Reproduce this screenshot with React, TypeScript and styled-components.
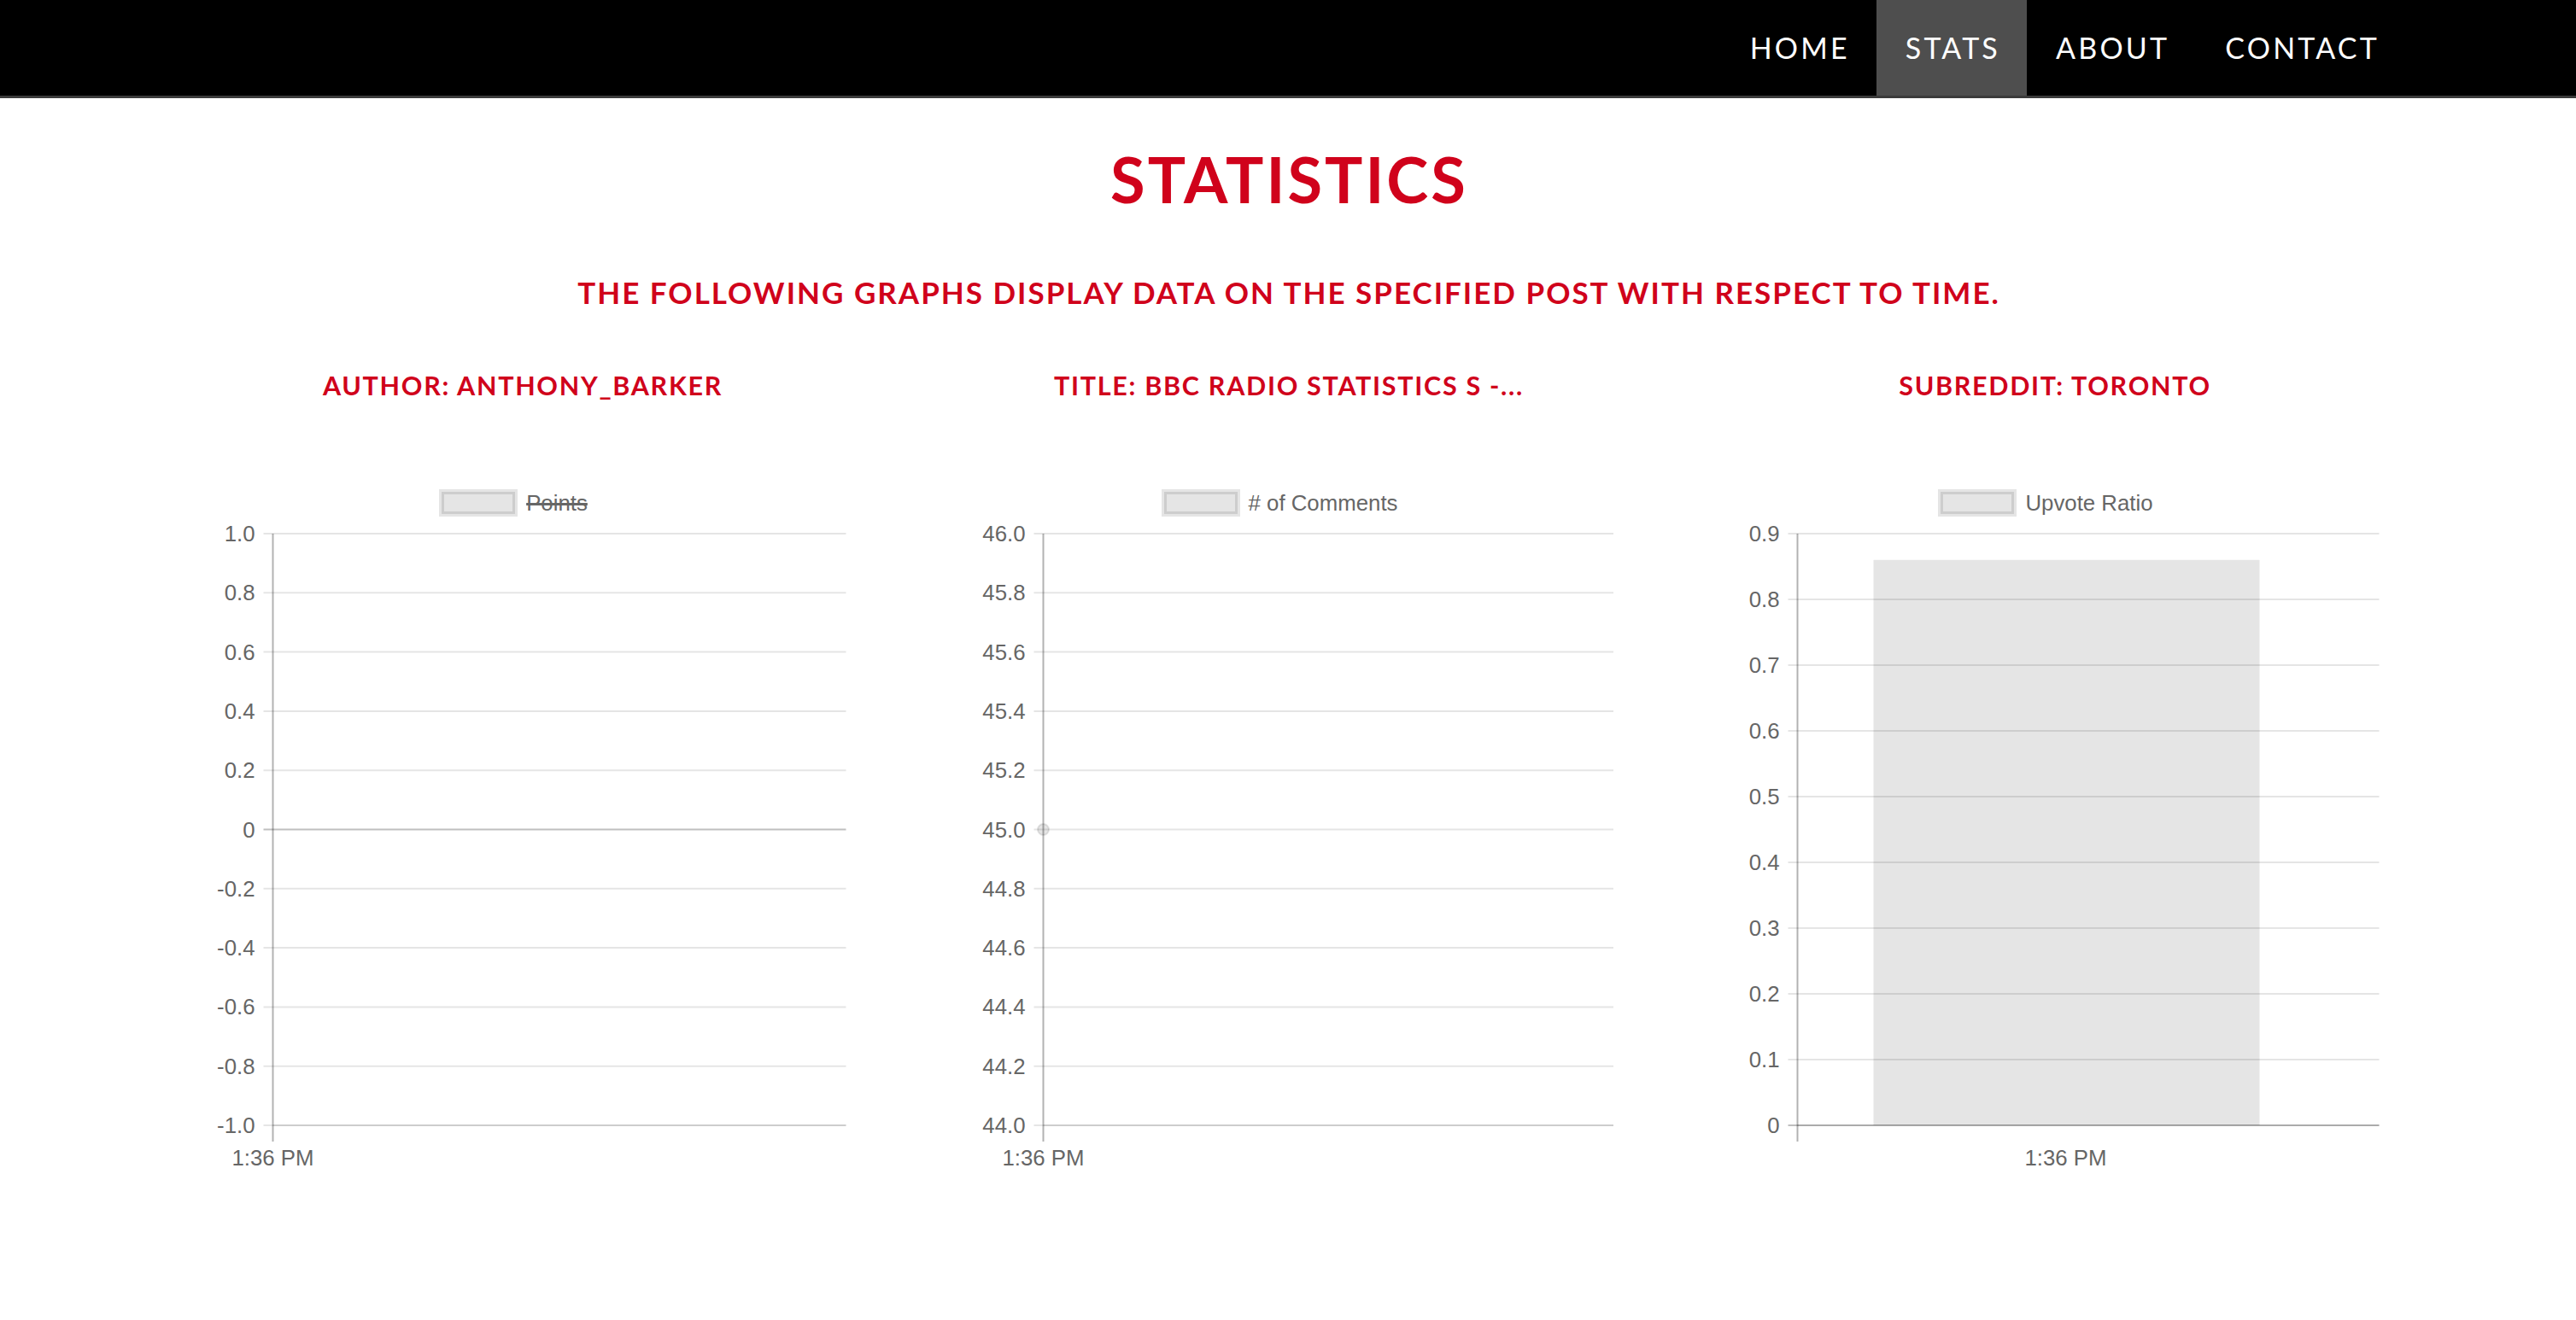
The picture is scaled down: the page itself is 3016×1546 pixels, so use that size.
import React from 'react';
import styled, { createGlobalStyle } from 'styled-components';

const RED = '#d0021b';
const HEAD_FONT = `'Lato', 'Open Sans', Arial, sans-serif`;
const CHART_FONT = `'Liberation Sans', Arial, Helvetica, sans-serif`;

const GlobalStyle = createGlobalStyle`
  html, body { margin: 0; padding: 0; background: #fff; }
  body { font-family: ${CHART_FONT}; }
  * { box-sizing: border-box; }
`;

const NavBar = styled.header`
  height: 115px;
  background: #000;
  border-bottom: 3px solid #3b3b3b;
  display: flex;
  justify-content: flex-end;
  padding-right: 199px;
`;

const NavLink = styled.a<{ $active?: boolean }>`
  display: block;
  height: 112px;
  line-height: 112px;
  padding: 0 31px 0 34px;
  font-family: ${HEAD_FONT};
  font-size: 34px;
  font-weight: 400;
  letter-spacing: 3.2px;
  color: #fff;
  text-decoration: none;
  text-transform: uppercase;
  background: ${(p) => (p.$active ? '#4e4e4e' : 'transparent')};
`;

const Main = styled.main`
  display: flex;
  flex-direction: column;
  align-items: center;
`;

const Title = styled.h1`
  margin: 50px 0 0;
  padding-left: 3px;
  font-family: ${HEAD_FONT};
  font-size: 74px;
  line-height: 89px;
  font-weight: 700;
  letter-spacing: 3px;
  color: ${RED};
  text-align: center;
`;

const Subtitle = styled.h2`
  margin: 67px 0 0;
  padding-left: 2px;
  font-family: ${HEAD_FONT};
  font-size: 35px;
  line-height: 42px;
  font-weight: 700;
  letter-spacing: 2px;
  color: ${RED};
  text-align: center;
`;

const Columns = styled.section`
  display: grid;
  grid-template-columns: repeat(3, 897px);
  justify-content: center;
  margin-top: 70px;
`;

const Column = styled.div`
  display: flex;
  flex-direction: column;
`;

const ColumnTitle = styled.h3`
  margin: 0;
  padding-left: 2px;
  font-family: ${HEAD_FONT};
  font-size: 30.5px;
  line-height: 37px;
  font-weight: 700;
  letter-spacing: 1.7px;
  color: ${RED};
  text-align: center;
`;

const ChartBox = styled.div`
  margin-top: 103px;
  margin-left: 48px;
  width: 781px;
`;

const Legend = styled.div`
  display: flex;
  justify-content: center;
  align-items: center;
  gap: 10px;
  height: 32px;
`;

const LegendSwatch = styled.svg`
  display: block;
  flex: none;
`;

const LegendLabel = styled.span<{ $hidden?: boolean }>`
  font-family: ${CHART_FONT};
  font-size: 25.8px;
  line-height: 32px;
  color: #666;
  text-decoration: ${(p) => (p.$hidden ? 'line-through' : 'none')};
  text-decoration-thickness: 3px;
  text-decoration-color: #666;
`;

const PlotSvg = styled.svg`
  display: block;
`;

const TickLabel = styled.text`
  font-family: ${CHART_FONT};
  font-size: 25.8px;
  fill: #666;
`;

type ChartSpec = {
  header: string;
  legend: string;
  hidden?: boolean;
  axisX: number;
  right: number;
  ticks: string[];
  zeroIndex?: number;
  pointIndex?: number;
  bar?: { x1: number; x2: number; frac: number };
  xLabelX: number;
};

const charts: ChartSpec[] = [
  {
    header: 'AUTHOR: ANTHONY_BARKER',
    legend: 'Points',
    hidden: true,
    axisX: 108.5,
    right: 779.5,
    ticks: ['1.0', '0.8', '0.6', '0.4', '0.2', '0', '-0.2', '-0.4', '-0.6', '-0.8', '-1.0'],
    zeroIndex: 5,
    xLabelX: 108.5,
  },
  {
    header: 'TITLE: BBC RADIO STATISTICS S -...',
    legend: '# of Comments',
    axisX: 113.5,
    right: 781.5,
    ticks: ['46.0', '45.8', '45.6', '45.4', '45.2', '45.0', '44.8', '44.6', '44.4', '44.2', '44.0'],
    pointIndex: 5,
    xLabelX: 113.5,
  },
  {
    header: 'SUBREDDIT: TORONTO',
    legend: 'Upvote Ratio',
    axisX: 99.5,
    right: 780.5,
    ticks: ['0.9', '0.8', '0.7', '0.6', '0.5', '0.4', '0.3', '0.2', '0.1', '0'],
    zeroIndex: 9,
    bar: { x1: 188.5, x2: 640.5, frac: 0.86 / 0.9 },
    xLabelX: 413.5,
  },
];

const TOP = 20;
const BOTTOM = 713;
const GRID = 'rgba(0,0,0,0.1)';
const ZERO = 'rgba(0,0,0,0.25)';

const Plot: React.FC<{ spec: ChartSpec }> = ({ spec }) => {
  const n = spec.ticks.length;
  const step = (BOTTOM - TOP) / (n - 1);
  return (
    <PlotSvg width={781} height={780} viewBox="0 0 781 780">
      {spec.bar && (
        <rect
          x={spec.bar.x1}
          y={BOTTOM - spec.bar.frac * (BOTTOM - TOP)}
          width={spec.bar.x2 - spec.bar.x1}
          height={spec.bar.frac * (BOTTOM - TOP)}
          fill="rgba(0,0,0,0.1)"
        />
      )}
      {spec.ticks.map((t, i) => {
        const y = TOP + i * step;
        return (
          <g key={t}>
            <line
              x1={spec.axisX - 11}
              x2={spec.right}
              y1={y}
              y2={y}
              stroke={i === spec.zeroIndex ? ZERO : GRID}
              strokeWidth={2}
            />
            <TickLabel x={spec.axisX - 21} y={y} dy="0.35em" textAnchor="end">
              {t}
            </TickLabel>
          </g>
        );
      })}
      <line x1={spec.axisX} x2={spec.right} y1={BOTTOM} y2={BOTTOM} stroke={GRID} strokeWidth={2} />
      <line x1={spec.axisX} x2={spec.axisX} y1={TOP} y2={BOTTOM + 19} stroke="rgba(0,0,0,0.3)" strokeWidth={2} />
      {spec.pointIndex !== undefined && (
        <circle
          cx={spec.axisX}
          cy={TOP + spec.pointIndex * step}
          r={6.5}
          fill="rgba(0,0,0,0.1)"
          stroke="rgba(0,0,0,0.1)"
          strokeWidth={2}
        />
      )}
      <TickLabel x={spec.xLabelX} y={751} dy="0.35em" textAnchor="middle">
        1:36 PM
      </TickLabel>
    </PlotSvg>
  );
};

const Chart: React.FC<{ spec: ChartSpec }> = ({ spec }) => (
  <Column>
    <ColumnTitle>{spec.header}</ColumnTitle>
    <ChartBox>
      <Legend>
        <LegendSwatch width={92} height={32} viewBox="0 0 92 32">
          <rect x={3} y={3} width={86} height={26} fill="rgba(0,0,0,0.1)" stroke="rgba(0,0,0,0.1)" strokeWidth={6} />
        </LegendSwatch>
        <LegendLabel $hidden={spec.hidden}>{spec.legend}</LegendLabel>
      </Legend>
      <Plot spec={spec} />
    </ChartBox>
  </Column>
);

export default function App() {
  return (
    <>
      <GlobalStyle />
      <NavBar>
        <NavLink href="#">Home</NavLink>
        <NavLink href="#" $active>
          Stats
        </NavLink>
        <NavLink href="#">About</NavLink>
        <NavLink href="#">Contact</NavLink>
      </NavBar>
      <Main>
        <Title>STATISTICS</Title>
        <Subtitle>THE FOLLOWING GRAPHS DISPLAY DATA ON THE SPECIFIED POST WITH RESPECT TO TIME.</Subtitle>
        <Columns>
          {charts.map((c) => (
            <Chart key={c.header} spec={c} />
          ))}
        </Columns>
      </Main>
    </>
  );
}
